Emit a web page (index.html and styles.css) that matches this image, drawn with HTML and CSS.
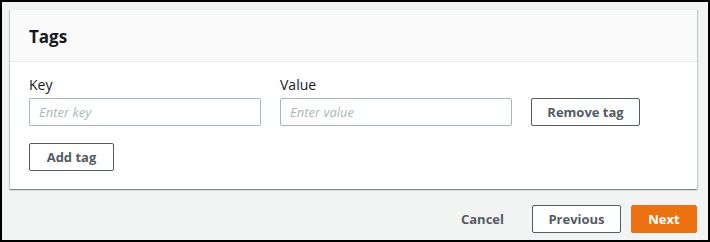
FILE: index.html
```html
<!DOCTYPE html>
<html>
<head>
<meta charset="utf-8">
<link rel="stylesheet" href="styles.css">
</head>
<body>
<div class="frame">
  <div class="card">
    <div class="card-header"><h2 class="title">Tags</h2></div>
    <div class="card-body">
      <div class="row">
        <div class="field">
          <label class="label">Key</label>
          <input class="input" type="text" placeholder="Enter key">
        </div>
        <div class="field">
          <label class="label">Value</label>
          <input class="input" type="text" placeholder="Enter value">
        </div>
        <button class="btn btn-remove">Remove tag</button>
      </div>
      <button class="btn btn-add">Add tag</button>
    </div>
  </div>
  <div class="footer">
    <button class="btn-link">Cancel</button>
    <button class="btn btn-prev">Previous</button>
    <button class="btn btn-primary">Next</button>
  </div>
</div>
</body>
</html>
```
FILE: styles.css
```css
* { box-sizing: border-box; }
html, body { margin: 0; padding: 0; }
body {
  font-family: "Open Sans", "Liberation Sans", sans-serif;
  font-size: 14px;
  color: #16191f;
}
.frame {
  width: 710px;
  height: 242px;
  border: 2px solid #000;
  background: #f2f3f3;
  padding: 7px 11px 0 8px;
}
.card {
  background: #fff;
  border-top: 1px solid #eaeded;
  box-shadow: 0 1px 1px 0 rgba(0,28,36,.3), 1px 1px 1px 0 rgba(0,28,36,.15), -1px 1px 1px 0 rgba(0,28,36,.15);
}
.card-header {
  background: #fafafa;
  border-bottom: 1px solid #eaeded;
  padding: 0 19px;
  height: 52px;
  display: flex;
  align-items: center;
}
.title {
  margin: 0;
  font-size: 17px;
  font-weight: 700;
  line-height: 22px;
  padding-top: 2px;
}
.card-body {
  padding: 12px 19px 18px;
}
.row {
  display: flex;
  align-items: flex-end;
  gap: 19px;
}
.field {
  display: flex;
  flex-direction: column;
  width: 232px;
}
.label {
  font-size: 14px;
  line-height: 22px;
  margin-bottom: 2px;
}
.input {
  height: 28px;
  border: 1px solid #aab7b8;
  border-radius: 2px;
  padding: 0 9px;
  font-family: inherit;
  font-size: 13px;
  color: #16191f;
  outline: none;
}
.input::placeholder {
  color: #aab7b8;
  font-style: italic;
}
.btn {
  height: 28px;
  border: 1px solid #545b64;
  border-radius: 2px;
  background: #fff;
  color: #545b64;
  font-family: inherit;
  font-size: 13px;
  font-weight: 700;
  padding: 0 17px;
  cursor: pointer;
}
.btn-remove { width: 109px; padding: 0; }
.btn-add { margin-top: 17px; width: 85px; padding: 0; }
.footer {
  display: flex;
  justify-content: flex-end;
  align-items: center;
  margin-top: 16px;
}
.btn-link {
  border: none;
  background: none;
  color: #545b64;
  font-family: inherit;
  font-size: 13px;
  font-weight: 700;
  padding: 0;
  margin-right: 28px;
  height: 28px;
}
.btn-prev { width: 89px; padding: 0; margin-right: 10px; }
.btn-primary {
  width: 66px;
  padding: 0;
  background: #ec7211;
  border-color: #ec7211;
  color: #fff;
}
```
